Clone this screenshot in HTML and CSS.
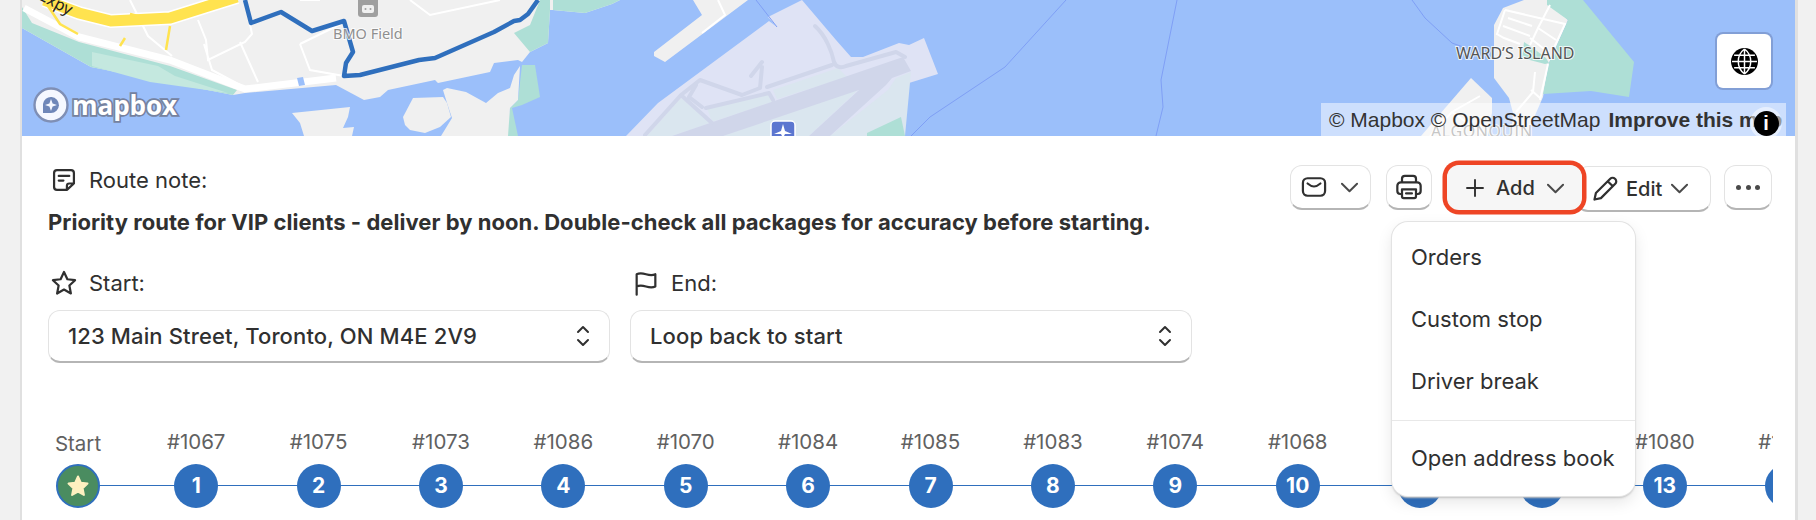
FILE: index.html
```html
<!DOCTYPE html>
<html lang="en">
<head>
<meta charset="utf-8">
<title>Route</title>
<link rel="stylesheet" href="styles.css">
</head>
<body>
<main class="card">
  <section class="map">
    <svg class="map-art" viewBox="22 0 1775 136" width="1775" height="136" aria-hidden="true">
      <rect class="water" x="22" y="0" width="1775" height="136"/>
      <path class="land" d="M22 0H620L612 4 585 13 553 10 550 10 548 43 530 52 522 62 518 60 494 63 490 72 438 83 435 80 388 90 380 97 364 100 336 85 245 93 233 95 91 67 22 28Z"/>
      <path class="green" d="M22 7 32 23 79 42 170 66 237 90 233 95 91 67 22 28Z"/>
      <path class="green-soft" d="M92 52 158 66 175 76 228 93 150 82 92 66Z"/>
      <path class="green" d="M553 0H620L612 4 585 13 553 10Z"/>
      <path class="green" d="M514 33 530 25 540 0H550L550 10 548 43 530 52Z"/>
      <path class="green" d="M522 65 535 65 540 97 522 105 512 108 518 136H505L510 108 518 100Z"/>
      <path class="land" d="M292 113 350 107 348 117 343 128 354 127 352 136H304L300 123Z"/>
      <path class="land" d="M403 117 413 98 443 97 447 103 451 117 440 127 425 133 410 130 405 125Z"/>
      <path class="land" d="M447 88 466 92 486 103 498 93 510 88 514 75 520 66 518 100 510 108 508 136H441L452 118 447 103 443 90Z"/>
      <path class="road" d="M24 8 79 37 170 60 237 86 245 89 336 78"/>
      <path class="road-thin" d="M130 0 148 36 172 56M198 20 206 40 208 60 245 42 252 34 245 0M204 44 212 70 240 85M240 42 258 82M300 44 310 70 344 76M300 44 345 22M300 0 320 0M410 0 430 15 500 0"/>
      <path class="highway-edge" d="M44 0 79 13 111 21 170 18 205 7 237 -3"/>
      <path class="highway" d="M44 0 79 13 111 21 170 18 205 7 237 -3"/>
      <path class="highway-thin" d="M48 6 60 24 78 34M125 38 120 46M170 26 166 50M130 14 138 16"/>
      <path class="shape" d="M297 78 303 77 305 85 299 86Z"/>
      <path class="land" d="M693 0H748L665 62 654 56 654 52 702 15Z"/>
      <path class="road-thin" d="M718 0 725 15 702 33"/>
      <path class="airport" d="M802 0 836 40 851 57 863 57 899 43 909 45 924 38 938 74 909 83 896 95 905 136H626L658 103 769 21 777 27 768 17Z"/>
      <path class="grass" d="M647 136 681 98 710 123 672 136Z"/>
      <path class="grass" d="M707 108 767 93 772 102 712 122Z"/>
      <path class="grass" d="M773 90 838 68 847 77 777 99Z"/>
      <path class="grass" d="M723 136 859 89 809 136Z"/>
      <path class="grass" d="M830 136 888 90 896 78 911 72 905 136Z"/>
      <path class="taxi-fill" d="M672 136 903 57 911 71 892 78 886 85 830 136H809L859 90 723 136Z"/>
      <path class="taxi" d="M815 26C826 36 832 52 834 62 836 68 842 68 846 66L896 52 905 57M645 135 681 95 700 80 742 95 760 88 762 67M762 62 751 76M767 87 832 65M681 95 712 123M702 107 689 97 696 85M706 108 769 93 773 100"/>
      <path class="green" d="M867 133 901 117 905 136H867Z"/>
      <path class="water-line" d="M1066 0 1005 67 930 117 911 136M1177 0 1161 80 1163 107 1156 136M1412 0 1425 18 1452 43 1463 47M756 0 777 27"/>
      <path class="land" d="M1503 8 1524 0H1547L1568 20 1549 63 1543 97 1526 136H1511L1513 113 1509 98 1494 78 1494 25Z"/>
      <path class="green" d="M1547 0H1583L1634 62 1629 97 1591 91 1543 94 1549 63 1568 20 1547 5Z"/>
      <path class="green" d="M1524 42 1533 48 1546 58 1549 63 1545 64 1522 58Z"/>
      <path class="road-thin" d="M1505 10 1497 34 1504 38 1520 44M1550 5 1538 28 1530 45M1505 10 1565 24 1553 50M1508 18 1532 26M1503 26 1530 36M1538 28 1556 40M1530 38 1548 52M1548 64 1540 100M1535 72 1533 92 1516 112M1531 90 1540 98"/>
      <path class="land" d="M1471 78 1492 98 1492 113 1488 136H1421Z"/>
      <path class="road-thin" d="M1480 96 1452 112 1430 136M1452 112 1486 136"/>
      <path class="route" d="M245 0 251 23 281 12 312 31 344 21 353 52 346 63 344 76 360 75 419 60 435 58 494 32 514 21 520 20 528 14 538 0"/>
      <rect class="poi" x="358" y="-3" width="20" height="20" rx="3"/>
      <rect class="poi-mark" x="362" y="5" width="12" height="8" rx="2"/>
      <circle class="poi-eye" cx="365.500" cy="9" r="1"/>
      <circle class="poi-eye" cx="370.500" cy="9" r="1"/>
      <text class="label label-bmo" x="333" y="39">BMO Field</text>
      <text class="label label-expy" x="38" y="-1" transform="rotate(28 38 -1)">Expy</text>
      <text class="label label-ward" x="1456" y="59">WARD’S ISLAND</text>
      <text class="label label-alg" x="1431" y="137">ALGONQUIN</text>
      <rect class="plane-box" x="771" y="121" width="24" height="24" rx="4"/>
      <path class="plane" d="M783 124 785 131 792 134 785 134 784 136H782L781 134 774 134 781 131Z"/>
    </svg>
    <div class="mapbox-logo">
      <svg class="mapbox-mark" viewBox="0 0 36 36" width="36" height="36" aria-hidden="true">
        <circle cx="18" cy="18" r="16.500" fill="#f5f8ff" stroke="#7f8fb5" stroke-width="2.400"/>
        <path d="M10 26V17a8 8 0 1 1 8 9Z" fill="#6f87b8"/>
        <path d="M18 12l1.600 4.400L24 18l-4.400 1.600L18 24l-1.600-4.400L12 18l4.400-1.600Z" fill="#f5f8ff"/>
      </svg>
      <span class="mapbox-word">mapbox</span>
    </div>
    <button class="globe" type="button" aria-label="Globe">
      <svg viewBox="0 0 26 26" width="27" height="27" aria-hidden="true">
        <circle cx="13" cy="13" r="13" fill="#000"/>
        <path d="M13 1v24M1 13h24M3 7h20M3 19h20M13 1c-8 6-8 18 0 24M13 1c8 6 8 18 0 24" fill="none" stroke="#fff" stroke-width="1.400"/>
      </svg>
    </button>
    <div class="attribution">
      <span>© Mapbox © OpenStreetMap</span><b>Improve this map</b>
    </div>
    <span class="info"><span class="info-dot">i</span></span>
  </section>

  <section class="body">
    <div class="head">
      <div class="note">
        <div class="label-row">
          <svg class="ico" viewBox="0 0 24 24" aria-hidden="true"><path d="M14.500 20.500H6A2.500 2.500 0 0 1 3.500 18V6A2.500 2.500 0 0 1 6 3.500h12A2.500 2.500 0 0 1 20.500 6v9Zm0 0v-3.500a2 2 0 0 1 2-2h4M7.500 8.500h9M7.500 12.500h4"/></svg>
          <span>Route note:</span>
        </div>
        <p class="note-text">Priority route for VIP clients - deliver by noon. Double-check all packages for accuracy before starting.</p>
      </div>
      <div class="tools">
        <button class="btn btn-mail" type="button">
          <svg class="ico" viewBox="0 0 24 24" aria-hidden="true"><rect x="2.500" y="4.500" width="19" height="15" rx="4"/><path d="M6.500 9c4 3.500 7 3.500 11 0"/></svg>
          <svg class="chev" viewBox="0 0 18 18" aria-hidden="true"><path d="M1 5l8 8 8-8"/></svg>
        </button>
        <button class="btn btn-print" type="button" aria-label="Print">
          <svg class="ico" viewBox="0 0 24 24" aria-hidden="true"><path d="M6 8V5a2.500 2.500 0 0 1 2.500-2.500h7A2.500 2.500 0 0 1 18 5v3M6 18H4.500A2.500 2.500 0 0 1 2 15.500V11a3 3 0 0 1 3-3h14a3 3 0 0 1 3 3v4.500a2.500 2.500 0 0 1-2.500 2.500H18"/><path d="M6 14h12v6a1.500 1.500 0 0 1-1.500 1.500h-9A1.500 1.500 0 0 1 6 20ZM9.500 17.500h5"/></svg>
        </button>
        <div class="add-wrap">
          <button class="btn btn-add" type="button">
            <svg class="ico ico-plus" viewBox="0 0 18 18" aria-hidden="true"><path d="M9 1v16M1 9h16"/></svg>
            <span>Add</span>
            <svg class="chev" viewBox="0 0 18 18" aria-hidden="true"><path d="M1 5l8 8 8-8"/></svg>
          </button>
          <div class="menu">
            <div class="menu-group">
              <div class="menu-item">Orders</div>
              <div class="menu-item">Custom stop</div>
              <div class="menu-item">Driver break</div>
            </div>
            <div class="menu-group menu-foot">
              <div class="menu-item">Open address book</div>
            </div>
          </div>
        </div>
        <button class="btn btn-edit" type="button">
          <svg class="ico" viewBox="0 0 24 24" aria-hidden="true"><path d="M3 21l1.200-5.500L16.500 3.200a2.800 2.800 0 0 1 4 0l.300.300a2.800 2.800 0 0 1 0 4L8.500 19.800ZM14.500 5.500l4 4"/></svg>
          <span>Edit</span>
          <svg class="chev" viewBox="0 0 18 18" aria-hidden="true"><path d="M1 5l8 8 8-8"/></svg>
        </button>
        <button class="btn btn-more" type="button" aria-label="More">
          <span class="dot"></span><span class="dot"></span><span class="dot"></span>
        </button>
      </div>
    </div>

    <div class="fields">
      <div class="field">
        <div class="label-row">
          <svg class="ico" viewBox="0 0 24 24" aria-hidden="true"><path d="M12 2.500l2.900 6.300 6.600.8-4.900 4.600 1.300 6.800-5.900-3.400-5.900 3.400 1.300-6.800-4.900-4.600 6.600-.8Z"/></svg>
          <span>Start:</span>
        </div>
        <div class="select">
          <span>123 Main Street, Toronto, ON M4E 2V9</span>
          <svg class="updown" viewBox="0 0 16 24" aria-hidden="true"><path d="M3 8l5-5 5 5M3 16l5 5 5-5"/></svg>
        </div>
      </div>
      <div class="field">
        <div class="label-row">
          <svg class="ico" viewBox="0 0 24 24" aria-hidden="true"><path d="M4 22V4.500c6-3 10 3 16 0V15c-6 3-10-3-16 0"/></svg>
          <span>End:</span>
        </div>
        <div class="select">
          <span>Loop back to start</span>
          <svg class="updown" viewBox="0 0 16 24" aria-hidden="true"><path d="M3 8l5-5 5 5M3 16l5 5 5-5"/></svg>
        </div>
      </div>
    </div>

    <div class="timeline">
      <div class="track"></div>
      <div class="stop stop-start">
        <span class="stop-label">Start</span>
        <span class="pin pin-start">
          <svg viewBox="0 0 24 24" width="24" height="24" aria-hidden="true"><path class="star" d="M12 2.500l2.900 6.300 6.600.8-4.900 4.600 1.300 6.800-5.900-3.400-5.900 3.400 1.300-6.800-4.900-4.600 6.600-.8Z"/></svg>
        </span>
      </div>
      <div class="stop"><span class="stop-label">#1067</span><span class="pin">1</span></div>
      <div class="stop"><span class="stop-label">#1075</span><span class="pin">2</span></div>
      <div class="stop"><span class="stop-label">#1073</span><span class="pin">3</span></div>
      <div class="stop"><span class="stop-label">#1086</span><span class="pin">4</span></div>
      <div class="stop"><span class="stop-label">#1070</span><span class="pin">5</span></div>
      <div class="stop"><span class="stop-label">#1084</span><span class="pin">6</span></div>
      <div class="stop"><span class="stop-label">#1085</span><span class="pin">7</span></div>
      <div class="stop"><span class="stop-label">#1083</span><span class="pin">8</span></div>
      <div class="stop"><span class="stop-label">#1074</span><span class="pin">9</span></div>
      <div class="stop"><span class="stop-label">#1068</span><span class="pin">10</span></div>
      <div class="stop"><span class="stop-label">#1071</span><span class="pin">11</span></div>
      <div class="stop"><span class="stop-label">#1077</span><span class="pin">12</span></div>
      <div class="stop"><span class="stop-label">#1080</span><span class="pin">13</span></div>
      <div class="stop"><span class="stop-label">#1072</span><span class="pin">14</span></div>
    </div>
  </section>
</main>
</body>
</html>
```
FILE: styles.css
```css
* { box-sizing: border-box; }
html, body { margin: 0; height: 520px; overflow: hidden; }
body {
  background: #f1f1f1;
  font-family: Inter, "Liberation Sans", sans-serif;
  color: #303030;
}
button { font: inherit; color: inherit; padding: 0; }

.card {
  margin-left: 20px;
  width: 1778px;
  height: 520px;
  background: #fff;
  border-left: 2px solid #e0e0e0;
  border-right: 3px solid #e0e0e0;
  overflow: hidden;
}

/* map */
.map { position: relative; height: 136px; overflow: hidden; }
.map-art { display: block; }
.water { fill: #9bbffa; }
.land { fill: #f0f0f0; }
.green { fill: #aedfd6; }
.green-soft { fill: #c4e8df; }
.road { fill: none; stroke: #fff; stroke-width: 7; }
.road-thin { fill: none; stroke: #fff; stroke-width: 2; }
.highway-edge { fill: none; stroke: #fff; stroke-width: 14; }
.highway { fill: none; stroke: #ffe34f; stroke-width: 11; }
.highway-thin { fill: none; stroke: #ffe34f; stroke-width: 2.500; }
.shape { fill: #9bbffa; }
.airport { fill: #dfe3f5; }
.grass { fill: #dae6ef; }
.taxi { fill: none; stroke: #d0d6ea; stroke-width: 4; stroke-linejoin: round; stroke-linecap: round; }
.taxi-fill { fill: #d0d6ea; }
.water-line { fill: none; stroke: #7f9ff5; stroke-width: 1; }
.route { fill: none; stroke: #2f6fbd; stroke-width: 4.500; stroke-linejoin: round; }
.poi { fill: #9f9f9f; }
.poi-mark { fill: #f0f0f0; }
.poi-eye { fill: #9f9f9f; }
.label { font-family: "Noto Sans", sans-serif; paint-order: stroke; stroke: rgba(255,255,255,.8); stroke-width: 2px; }
.label-bmo { font-size: 14.500px; fill: #8f8f8f; }
.label-expy { font-size: 16px; fill: #222; stroke: none; }
.label-ward { font-size: 16px; fill: #555; }
.label-alg { font-size: 16px; fill: #8d8d8d; letter-spacing: .6px; }
.plane-box { fill: #5c76d0; stroke: #fff; stroke-width: 1.500; }
.plane { fill: #fff; }

.mapbox-logo {
  position: absolute;
  left: 11px;
  top: 87px;
  display: flex;
  align-items: center;
  gap: 3px;
}
.mapbox-mark { display: block; }
.mapbox-word {
  font-family: "Open Sans", sans-serif;
  font-weight: 700;
  font-size: 26px;
  line-height: 36px;
  letter-spacing: -.05px;
  color: #fff;
  -webkit-text-stroke: 3.500px #75829f;
  paint-order: stroke fill;
}
.globe {
  position: absolute;
  left: 1695px;
  top: 34px;
  width: 54px;
  height: 54px;
  background: #fff;
  border: 0;
  border-radius: 6px;
  box-shadow: 0 0 0 2px rgba(100,120,170,.45);
  display: flex;
  align-items: center;
  justify-content: center;
}
.attribution {
  position: absolute;
  left: 1299px;
  top: 103px;
  width: 465px;
  height: 33px;
  padding-left: 8px;
  background: rgba(255,255,255,.5);
  overflow: hidden;
  white-space: nowrap;
  font-family: "Liberation Sans", sans-serif;
  font-size: 21px;
  line-height: 33px;
  color: #333;
}
.attribution b { margin-left: 8px; }
.info {
  position: absolute;
  left: 1728px;
  top: 107px;
  width: 32px;
  height: 32px;
  border-radius: 50%;
  background: rgba(255,255,255,.5);
  display: flex;
  align-items: center;
  justify-content: center;
}
.info-dot {
  width: 25px;
  height: 25px;
  border-radius: 50%;
  background: #000;
  color: #fff;
  font-family: "Liberation Sans", sans-serif;
  font-weight: 700;
  font-size: 20px;
  line-height: 25px;
  text-align: center;
}

/* body */
.body { padding: 24px 23px 0 26px; }
.head { display: flex; justify-content: space-between; align-items: flex-start; }
.note { padding-top: 8px; }
.label-row { display: flex; align-items: center; gap: 13px; height: 24px; padding-left: 4px; font-size: 22px; }
.note-text { margin: 18px 0 0; font-size: 22px; line-height: 24px; font-weight: 700; letter-spacing: .035px; }

.ico { width: 28px; height: 28px; margin: -2px; flex: none; fill: none; stroke: #303030; stroke-width: 1.900; stroke-linejoin: round; stroke-linecap: round; }
.chev { width: 17px; height: 17px; flex: none; fill: none; stroke: #4a4a4a; stroke-width: 2.100; stroke-linecap: round; stroke-linejoin: round; }

.tools { display: flex; align-items: flex-start; margin-top: 5px; }
.btn {
  display: flex;
  align-items: center;
  height: 45px;
  background: #fff;
  border: 1px solid #e3e3e3;
  border-bottom: 2px solid #b5b5b5;
  border-radius: 12px;
  font-size: 20px;
  font-weight: 500;
}
.btn-mail { width: 81px; padding-left: 11px; gap: 15px; }
.btn-print { width: 46px; margin-left: 15px; justify-content: center; }
.add-wrap { position: relative; margin-left: 15px; z-index: 2; }
.btn-add {
  width: 135px;
  padding: 2px 0 0 18px;
  gap: 12px;
  background: #f6f6f6;
  box-shadow: 0 0 0 4.500px #ee4525;
  border-color: #f6f6f6;
  border-radius: 12px;
}
.ico-plus { width: 18px; height: 18px; margin: 0; }
.btn-edit { width: 135px; height: 46px; margin-left: -6px; margin-top: 1px; padding-left: 16px; gap: 9px; }
.btn-more { width: 48px; margin-left: 13px; justify-content: center; gap: 4.500px; }
.dot { width: 5px; height: 5px; border-radius: 50%; background: #4a4a4a; }

.menu {
  position: absolute;
  left: -55px;
  top: 57px;
  width: 243px;
  height: 274px;
  background: #fff;
  border-radius: 16px;
  box-shadow: 0 0 0 1px #e3e3e3, 0 2px 2px #c4c4c4, 0 6px 16px rgba(0,0,0,.1);
  z-index: 5;
  display: flex;
  flex-direction: column;
}
.menu-group { padding-top: 4px; }
.menu-item { height: 62px; padding: 0 19px; display: flex; align-items: center; font-size: 22px; white-space: nowrap; }
.menu-foot { margin-top: auto; border-top: 1px solid #e8e8e8; padding: 6px 0 6px; height: 76px; }

.fields { display: flex; gap: 20px; margin-top: 37px; }
.field { width: 562px; }
.select {
  margin-top: 15px;
  height: 53px;
  background: #fff;
  border: 1px solid #e3e3e3;
  border-bottom: 2px solid #b5b5b5;
  border-radius: 12px;
  padding: 0 19px;
  display: flex;
  align-items: center;
  justify-content: space-between;
  font-size: 22px;
  font-weight: 500;
  letter-spacing: .13px;
}
.updown { width: 16px; height: 24px; fill: none; stroke: #303030; stroke-width: 2; stroke-linecap: round; stroke-linejoin: round; margin-right: -1px; }

.timeline { position: relative; display: flex; width: 1724px; margin-top: 66px; margin-left: 1px; overflow: hidden; height: 100px; }
.track { position: absolute; left: 30px; right: 0; top: 56px; height: 1px; background: #2f6fbd; }
.stop { position: relative; flex: none; width: 122.400px; display: flex; flex-direction: column; align-items: center; }
.stop-start { width: 58px; }
.stop-start + .stop { margin-left: 28px; }
.stop-label { height: 26px; line-height: 26px; font-size: 20.500px; color: #616161; white-space: nowrap; }
.stop-start .stop-label { margin-top: 2px; height: 24px; }
.pin {
  margin-top: 9px;
  width: 44px;
  height: 44px;
  border-radius: 50%;
  background: #2f6fbd;
  color: #fff;
  font-weight: 700;
  font-size: 21px;
  line-height: 44px;
  text-align: center;
}
.pin-start {
  background: #4a8c60;
  border: 2px solid #2f6fbd;
  display: flex;
  align-items: center;
  justify-content: center;
}
.star { fill: #fdf0c0; stroke: #fdf0c0; stroke-width: 2; stroke-linejoin: round; }
```
